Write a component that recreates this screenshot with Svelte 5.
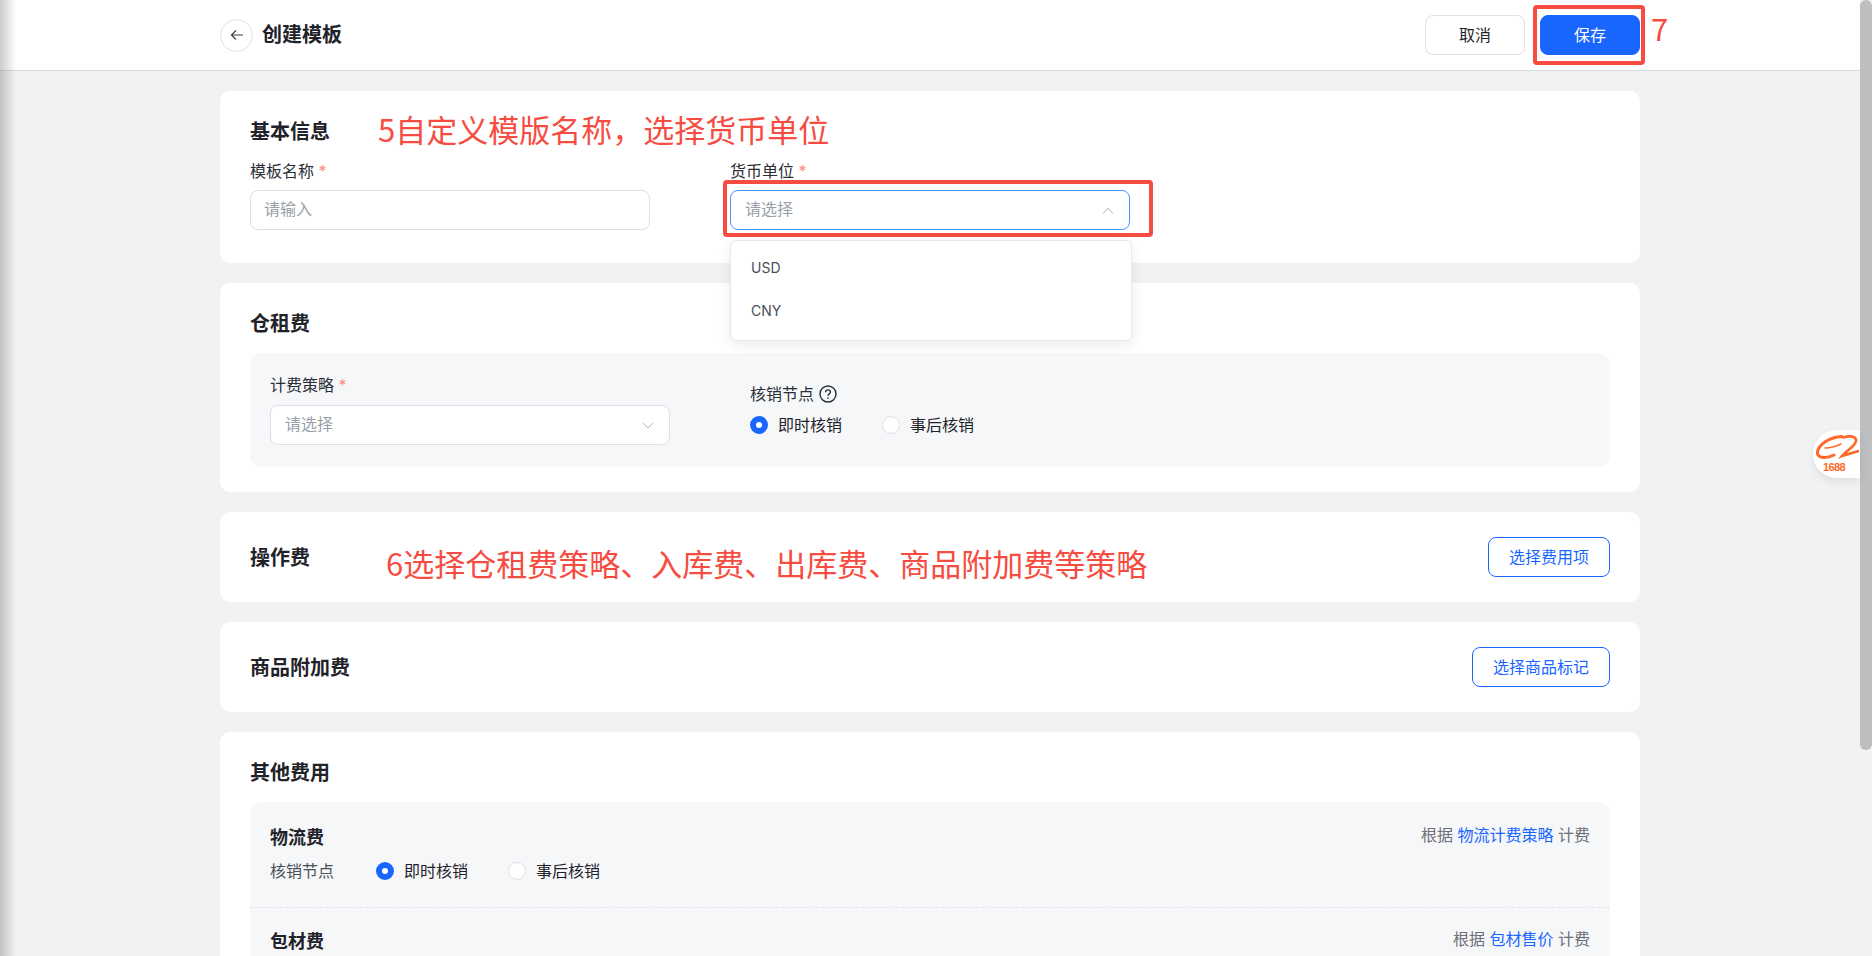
<script lang="ts">
	const currencies = ['USD', 'CNY'];
</script>

{#snippet radios()}
	<label class="radio checked"><span class="dot"></span>即时核销</label>
	<label class="radio"><span class="dot"></span>事后核销</label>
{/snippet}

<div class="page">
	<header class="topbar">
		<div class="topbar-inner">
			<button class="back" aria-label="返回">
				<svg width="14" height="14" viewBox="0 0 14 14" fill="none" stroke="#3c4048" stroke-width="1.2">
					<path d="M13 7H1.5M6 2.5 1.5 7 6 11.5" />
				</svg>
			</button>
			<h1>创建模板</h1>
			<div class="actions">
				<button class="btn">取消</button>
				<div class="save-wrap">
					<button class="btn primary">保存</button>
					<span class="mark mark-save"></span>
					<span class="note seven">7</span>
				</div>
			</div>
		</div>
	</header>

	<main class="content">
		<section class="card">
			<div class="title-row">
				<h2>基本信息</h2>
				<span class="note note-first">5自定义模版名称，选择货币单位</span>
			</div>
			<div class="form-row">
				<div class="field">
					<div class="label">模板名称 <i>*</i></div>
					<div class="input plain">请输入</div>
				</div>
				<div class="field currency">
					<div class="label">货币单位 <i>*</i></div>
					<div class="input open">
						请选择
						<svg class="chev" width="12" height="7" viewBox="0 0 12 7" fill="none" stroke="#a8adb5">
							<path d="M1 6.5 6 1.2l5 5.3" />
						</svg>
					</div>
					<span class="mark mark-select"></span>
					<ul class="dropdown">
						{#each currencies as c}
							<li>{c}</li>
						{/each}
					</ul>
				</div>
			</div>
		</section>

		<section class="card">
			<h2>仓租费</h2>
			<div class="panel storage">
				<div class="field">
					<div class="label">计费策略 <i>*</i></div>
					<div class="input">
						请选择
						<svg class="chev" width="12" height="7" viewBox="0 0 12 7" fill="none" stroke="#a8adb5">
							<path d="M1 .8 6 6l5-5.2" />
						</svg>
					</div>
				</div>
				<div class="writeoff">
					<div class="label help">
						核销节点
						<svg width="18" height="18" viewBox="0 0 18 18" fill="none" stroke="#2a2e36" stroke-width="1.4">
							<circle cx="9" cy="9" r="8" />
							<path d="M6.6 7.2c0-1.4 1-2.3 2.4-2.3s2.4.9 2.4 2.1c0 1.9-2.4 1.9-2.4 3.8" />
							<path d="M9 12.3v1.4" />
						</svg>
					</div>
					<div class="radios">{@render radios()}</div>
				</div>
			</div>
		</section>

		<section class="card row-card">
			<div class="title-row">
				<h2>操作费</h2>
				<span class="note note-second">6选择仓租费策略、入库费、出库费、商品附加费等策略</span>
			</div>
			<button class="btn outline">选择费用项</button>
		</section>

		<section class="card row-card">
			<h2>商品附加费</h2>
			<button class="btn outline">选择商品标记</button>
		</section>

		<section class="card">
			<h2>其他费用</h2>
			<div class="panel fees">
				<div class="fee">
					<div class="fee-head">
						<h3>物流费</h3>
						<span class="hint">根据 <a href="#logistics">物流计费策略</a> 计费</span>
					</div>
					<div class="fee-line">
						<span class="fee-label">核销节点</span>
						<div class="radios">{@render radios()}</div>
					</div>
				</div>
				<div class="fee">
					<div class="fee-head">
						<h3>包材费</h3>
						<span class="hint">根据 <a href="#packing">包材售价</a> 计费</span>
					</div>
				</div>
			</div>
		</section>
	</main>

	<div class="edge-shadow"></div>
	<div class="scrollbar"><div class="thumb"></div></div>
	<div class="pill">
		<svg width="44" height="25" viewBox="0 0 44 25" fill="none" stroke="#ff6a2a" stroke-linecap="round">
			<path stroke-width="3" d="M27 1.5C14 2 3.500 10 2.500 17c-.8 6 8 7 16.500 3" />
			<path stroke-width="1.4" d="M10 13c6 0 12-2 16-4" />
			<path stroke-width="2.6" d="M28 2.500c7-2 13.500-1.500 13 3.500-.5 5-10 10-14 15 5-2 11-3 16.500-5" />
		</svg>
		<span>1688</span>
	</div>
</div>

<style>
	:global(body) {
		background: #f1f2f4;
		overflow: hidden;
	}
	.page {
		position: relative;
		height: 956px;
		overflow: hidden;
		font-family: Inter, "Noto Sans CJK SC", sans-serif;
		font-size: 16px;
		color: #1f2329;
	}
	.topbar {
		height: 70px;
		background: #fff;
		border-bottom: 1px solid #d9dbe1;
		padding-right: 12px;
	}
	.topbar-inner {
		width: 1420px;
		height: 70px;
		margin: 0 auto;
		display: flex;
		align-items: center;
	}
	.back {
		width: 33px;
		height: 33px;
		padding: 0;
		border: 1px solid #dfe1e8;
		border-radius: 50%;
		background: #fff;
		display: flex;
		align-items: center;
		justify-content: center;
	}
	h1 {
		margin: 0 0 0 9px;
		font-size: 20px;
		font-weight: 700;
		line-height: 24px;
	}
	.actions {
		margin-left: auto;
		display: flex;
		gap: 15px;
	}
	.btn {
		height: 40px;
		padding: 0 24px 2px;
		border: 1px solid #dfe1e8;
		border-radius: 8px;
		background: #fff;
		color: #1f2329;
		font: inherit;
		font-size: 16px;
	}
	.btn.primary {
		display: block;
		width: 100px;
		border-color: #1966ff;
		background: #1966ff;
		color: #fff;
	}
	.btn.outline {
		border-color: #1966ff;
		color: #1966ff;
		padding: 0 20px 2px;
	}
	.actions > .btn {
		width: 100px;
	}
	.save-wrap {
		position: relative;
	}
	.mark {
		position: absolute;
		border: 4px solid #f64c41;
		border-radius: 4px;
		pointer-events: none;
	}
	.mark-save {
		left: -7px;
		right: -5px;
		top: -10px;
		bottom: -10px;
	}
	.mark-select {
		left: -7px;
		top: 19px;
		width: 430px;
		height: 57px;
		box-sizing: border-box;
	}
	.note {
		color: #f64c41;
		font-size: 31px;
		font-family: "Noto Sans CJK SC", sans-serif;
		font-weight: 400;
		line-height: 20px;
		white-space: nowrap;
	}
	.seven {
		position: absolute;
		left: 111px;
		top: 3px;
	}
	.content {
		width: 1420px;
		margin: 20px auto 0;
		padding-right: 12px;
		box-sizing: content-box;
		display: flex;
		flex-direction: column;
		gap: 20px;
	}
	.card {
		background: #fff;
		border-radius: 10px;
		padding: 30px;
	}
	.card:first-child {
		padding-bottom: 33px;
	}
	h2 {
		margin: 0 0 -1px;
		padding-top: 1px;
		font-size: 20px;
		font-weight: 700;
		line-height: 20px;
	}
	h3 {
		margin: 0;
		font-size: 18px;
		font-weight: 700;
		line-height: 20px;
	}
	.title-row {
		display: flex;
		align-items: center;
	}
	.note-first {
		margin-left: 48px;
		position: relative;
		top: -2px;
	}
	.note-second {
		margin-left: 76px;
		position: relative;
		top: 6px;
	}
	.form-row {
		display: flex;
		gap: 80px;
		margin-top: 20px;
	}
	.field {
		position: relative;
		width: 400px;
	}
	.label {
		line-height: 20px;
		margin-bottom: 9px;
		color: #2a2e36;
	}
	.label i {
		color: #f88;
		font-style: normal;
	}
	.input {
		position: relative;
		height: 40px;
		box-sizing: border-box;
		border: 1px solid #dcdfe6;
		border-radius: 8px;
		background: #fff;
		padding: 0 14px;
		line-height: 36px;
		color: #999fa8;
	}
	.input.plain {
		padding-left: 13px;
	}
	.input.open {
		border-color: #4096ff;
	}
	.chev {
		position: absolute;
		right: 15px;
		top: 16px;
	}
	.dropdown {
		position: absolute;
		z-index: 2;
		left: 0;
		top: 79px;
		width: 402px;
		height: 101px;
		box-sizing: border-box;
		margin: 0;
		padding: 5px 0;
		list-style: none;
		background: #fff;
		border: 1px solid #e6e8ee;
		border-radius: 6px;
		box-shadow: 0 4px 14px rgba(0, 0, 0, 0.08);
		color: #4a4f58;
		font-size: 14px;
	}
	.dropdown li {
		height: 43px;
		line-height: 43px;
		padding-left: 20px;
	}
	.panel {
		background: #f6f7f9;
		border-radius: 12px;
		margin-top: 20px;
	}
	.storage {
		display: flex;
		gap: 80px;
		padding: 23px 20px 22px;
	}
	.card:has(.storage) {
		padding-bottom: 25px;
	}
	.storage .field .label {
		margin-top: -1px;
		margin-bottom: 10px;
	}
	.writeoff {
		padding-top: 8px;
	}
	.help {
		display: flex;
		align-items: center;
		gap: 5px;
		margin-bottom: 11px;
	}
	.radios {
		display: flex;
		gap: 40px;
		line-height: 20px;
	}
	.radio {
		display: flex;
		align-items: center;
		gap: 10px;
	}
	.dot {
		width: 18px;
		height: 18px;
		box-sizing: border-box;
		border: 1px solid #dfe1e8;
		border-radius: 50%;
		background: #fff;
	}
	.checked .dot {
		border: 6px solid #1966ff;
	}
	.row-card {
		display: flex;
		align-items: center;
		justify-content: space-between;
		padding: 25px 30px;
	}
	.fee {
		padding: 26px 20px;
	}
	.fee + .fee {
		padding-top: 24px;
		border-top: 1px dashed #e3e5ea;
	}
	.fee-head {
		display: flex;
		align-items: center;
		justify-content: space-between;
	}
	.hint {
		color: #6b6f76;
		margin-top: -9px;
	}
	.hint a {
		color: #1966ff;
		text-decoration: none;
	}
	.fee-line {
		display: flex;
		align-items: center;
		margin-top: 13px;
		line-height: 20px;
	}
	.fee-label {
		width: 106px;
		color: #4a4f58;
	}
	.edge-shadow {
		position: absolute;
		left: 0;
		top: 0;
		bottom: 0;
		width: 16px;
		background: linear-gradient(to right, rgba(0, 0, 0, 0.2), rgba(0, 0, 0, 0));
		pointer-events: none;
	}
	.scrollbar {
		position: absolute;
		right: 0;
		top: 0;
		bottom: 0;
		width: 12px;
		background: #f1f2f4;
	}
	.thumb {
		height: 750px;
		background: #bdbec0;
		border-radius: 6px;
	}
	.pill {
		position: absolute;
		right: 12px;
		top: 430px;
		width: 47px;
		height: 48px;
		box-sizing: border-box;
		background: #fff;
		border-radius: 24px 0 0 24px;
		box-shadow: 0 4px 10px rgba(0, 0, 0, 0.08);
		display: flex;
		flex-direction: column;
		align-items: flex-start;
		padding: 5px 0 0 2px;
		overflow: hidden;
	}
	.pill svg {
		flex: none;
	}
	.pill span {
		color: #ff6a2a;
		font-family: "Liberation Sans", sans-serif;
		font-size: 11px;
		font-weight: 700;
		line-height: 12px;
		letter-spacing: -0.6px;
		margin: 1px 0 0 8px;
	}
</style>
